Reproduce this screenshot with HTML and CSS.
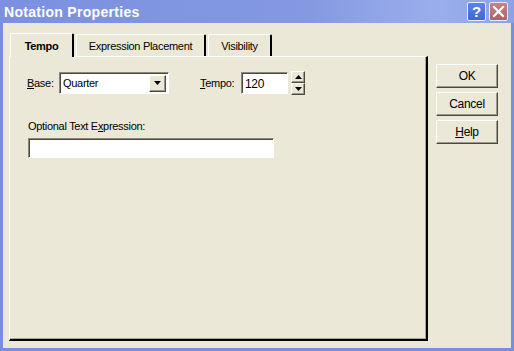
FILE: index.html
```html
<!DOCTYPE html>
<html lang="en">

<head>
  <meta charset="UTF-8" />
  <title>Notation Properties</title>
  <link rel="stylesheet" href="styles.css">
</head>

<body>
  <div class="window">
    <div class="titlebar">
      <span class="title">Notation Properties</span>
      <div class="caption-buttons">
        <span class="cap-btn cap-help">?</span>
        <span class="cap-btn cap-close">
          <svg width="13" height="13" viewBox="0 0 13 13">
            <path d="M2 2 L11 11 M11 2 L2 11" stroke="#fff" stroke-width="2.2" stroke-linecap="square" />
          </svg>
        </span>
      </div>
    </div>
    <div class="frame">
      <div class="tabs-area">
        <div class="tab-row">
          <div class="tab active">Tempo</div>
          <div class="tab tab-wide">Expression Placement</div>
          <div class="tab tab-vis">Visibility</div>
        </div>
        <div class="panel">
          <div class="field-row">
            <label class="lbl lbl-base"><u>B</u>ase:</label>
            <div class="combo">
              <span class="combo-text">Quarter</span>
              <span class="combo-btn">
                <svg width="7" height="4" viewBox="0 0 7 4"><path d="M0 0 H7 L3.5 4 Z" fill="#000" /></svg>
              </span>
            </div>
            <label class="lbl lbl-tempo"><u>T</u>empo:</label>
            <div class="edit edit-tempo">120</div>
            <div class="spinner">
              <span class="spin-btn">
                <svg width="7" height="4" viewBox="0 0 7 4"><path d="M0 4 H7 L3.5 0 Z" fill="#000" /></svg>
              </span>
              <span class="spin-btn">
                <svg width="7" height="4" viewBox="0 0 7 4"><path d="M0 0 H7 L3.5 4 Z" fill="#000" /></svg>
              </span>
            </div>
          </div>
          <div class="lbl lbl-optional">Optional Text E<u>x</u>pression:</div>
          <div class="edit edit-text"></div>
        </div>
      </div>
      <div class="side-buttons">
        <div class="btn">OK</div>
        <div class="btn">Cancel</div>
        <div class="btn"><u>H</u>elp</div>
      </div>
    </div>
  </div>
</body>

</html>
```

FILE: styles.css
```css
body {
  margin: 0;
  width: 514px;
  height: 351px;
  overflow: hidden;
  font-family: 'Liberation Sans', Arial, sans-serif;
  font-size: 11px;
  letter-spacing: -0.3px;
  color: #000;
}

.window {
  width: 514px;
  height: 351px;
  display: flex;
  flex-direction: column;
}

.titlebar {
  height: 23px;
  flex: none;
  display: flex;
  align-items: center;
  justify-content: space-between;
  background: linear-gradient(to right, #7b90df 0%, #8599e2 60%, #9aaeec 85%, #8da2e6 100%);
}

.title {
  color: #fff;
  font-weight: bold;
  font-size: 14px;
  padding-left: 4px;
  letter-spacing: 0.3px;
}

.caption-buttons {
  display: flex;
  gap: 3px;
  padding-right: 6px;
}

.cap-btn {
  width: 19px;
  height: 19px;
  border-radius: 2px;
  border: 1px solid #e8ecf8;
  box-sizing: border-box;
  display: flex;
  align-items: center;
  justify-content: center;
  color: #fff;
  font-weight: bold;
  font-size: 15px;
  letter-spacing: 0;
}

.cap-help {
  background: linear-gradient(#5d85e8, #3e66d6);
}

.cap-close {
  background: linear-gradient(#c8828a, #b0606c);
}

.frame {
  flex: 1;
  display: flex;
  background: #ebe8d8;
  border: 3px solid #7a8fdc;
  border-top: none;
}

.tabs-area {
  margin: 9px 0 0 6px;
  width: 419px;
  display: flex;
  flex-direction: column;
}

.tab-row {
  height: 24px;
  display: flex;
  align-items: flex-end;
}

.tab {
  height: 22px;
  box-sizing: border-box;
  border-top: 1px solid #fff;
  border-left: 1px solid #fff;
  border-right: 2px solid #000;
  border-radius: 2px 2px 0 0;
  padding: 5px 0 0 0;
  text-align: center;
  margin-left: 2px;
}

.tab.active {
  height: 24px;
  width: 64px;
  margin-left: 1px;
  font-weight: bold;
  padding-top: 6px;
  margin-bottom: -1px;
  background: #ebe8d8;
  position: relative;
}

.tab-wide {
  width: 130px;
}

.tab-vis {
  width: 64px;
}

.panel {
  height: 285px;
  box-sizing: border-box;
  border-top: 1px solid #fff;
  border-left: 1px solid #fff;
  border-right: 2px solid #000;
  border-bottom: 2px solid #000;
  box-shadow: inset -1px -1px 0 #a6a39a;
  padding: 15px 0 0 17px;
}

.field-row {
  display: flex;
  align-items: center;
  height: 22px;
}

.lbl-base {
  width: 32px;
}

.combo {
  width: 110px;
  height: 22px;
  box-sizing: border-box;
  background: #fff;
  border-top: 1px solid #8a877c;
  border-left: 1px solid #8a877c;
  border-right: 1px solid #fff;
  border-bottom: 1px solid #fff;
  box-shadow: inset 1px 1px 0 #4a4840;
  display: flex;
  align-items: center;
  justify-content: space-between;
  padding: 0 2px 0 3px;
}

.combo-btn,
.spin-btn {
  background: #ebe8d8;
  border-top: 1px solid #fff;
  border-left: 1px solid #fff;
  border-right: 1px solid #4a4840;
  border-bottom: 1px solid #4a4840;
  box-shadow: inset -1px -1px 0 #9c998e;
  box-sizing: border-box;
  display: flex;
  align-items: center;
  justify-content: center;
}

.combo-btn {
  width: 17px;
  height: 17px;
}

.lbl-tempo {
  margin-left: 31px;
  width: 41px;
}

.edit {
  background: #fff;
  box-sizing: border-box;
  border-top: 1px solid #8a877c;
  border-left: 1px solid #8a877c;
  border-right: 1px solid #fff;
  border-bottom: 1px solid #fff;
  box-shadow: inset 1px 1px 0 #4a4840;
}

.edit-tempo {
  width: 47px;
  height: 22px;
  padding: 4px 0 0 3px;
  font-size: 12px;
}

.spinner {
  margin-left: 3px;
  display: flex;
  flex-direction: column;
}

.spin-btn {
  width: 14px;
  height: 12px;
}

.lbl-optional {
  margin: 26px 0 0 1px;
}

.edit-text {
  margin: 6px 0 0 1px;
  width: 246px;
  height: 20px;
}

.side-buttons {
  margin: 41px 0 0 8px;
  display: flex;
  flex-direction: column;
  gap: 4px;
}

.btn {
  width: 62px;
  height: 24px;
  box-sizing: border-box;
  border-top: 1px solid #fff;
  border-left: 1px solid #fff;
  border-right: 1px solid #4a4840;
  border-bottom: 1px solid #4a4840;
  box-shadow: inset -1px -1px 0 #9c998e;
  display: flex;
  align-items: center;
  justify-content: center;
  font-size: 12px;
}
```
